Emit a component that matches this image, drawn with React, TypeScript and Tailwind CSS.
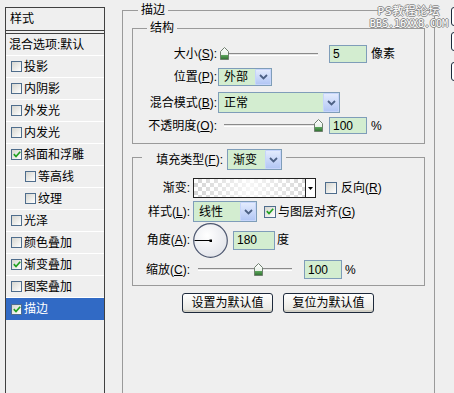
import React from "react";

function Chevron() {
  return (
    <svg width="9" height="6" viewBox="0 0 9 6">
      <path d="M1 1 L4.5 4.5 L8 1" stroke="#4d6185" strokeWidth="1.8" fill="none" />
    </svg>
  );
}

function Select({ text, className }: { text: string; className: string }) {
  return (
    <div className={"flex shrink-0 border border-[#7f9db9] bg-[#d3edd0] " + className}>
      <div className="flex-1 flex items-center pl-[5px]">{text}</div>
      <div className="w-[16px] flex items-center justify-center bg-linear-to-b from-[#e3ebfd] to-[#b3c7f5] border border-[#c6d5fb] rounded-[1px]">
        <Chevron />
      </div>
    </div>
  );
}

function Box({ checked, big }: { checked?: boolean; big?: boolean }) {
  return (
    <span
      className={
        (big ? "w-[12px] h-[12px] " : "w-[11px] h-[11px] ") +
        "shrink-0 flex items-center justify-center border border-[#4f6d8c] bg-linear-to-br from-[#d6d6d0] to-white"
      }
    >
      {checked && (
        <svg width="8" height="7" viewBox="0 0 8 7">
          <path d="M0.8 3.2 L3 5.5 L7.2 0.8" stroke="#21a121" strokeWidth="1.7" fill="none" />
        </svg>
      )}
    </span>
  );
}

function Thumb() {
  return (
    <svg width="9" height="13" viewBox="0 0 9 13">
      <defs>
        <linearGradient id="tg" x1="0" y1="0" x2="0" y2="1">
          <stop offset="0" stopColor="#ffffff" />
          <stop offset="0.62" stopColor="#e9f1e9" />
          <stop offset="0.66" stopColor="#5aa35a" />
          <stop offset="1" stopColor="#2f6f2f" />
        </linearGradient>
      </defs>
      <path d="M0.5 4.5 L4.5 0.5 L8.5 4.5 L8.5 12.5 L0.5 12.5 Z" fill="url(#tg)" stroke="#6f7f6f" strokeWidth="1" />
    </svg>
  );
}

function Slider({ frac, width, className }: { frac: number; width: number; className: string }) {
  const left = 3 + frac * (width - 6) - 4.5;
  return (
    <div className={"relative flex shrink-0 items-center px-[3px] " + className}>
      <div className="w-full h-[3px] border-t border-[#8a8a8a] border-b border-b-white bg-[#e6e6e6]" />
      <div className="absolute top-1/2 -translate-y-[7px] flex" style={{ left }}>
        <Thumb />
      </div>
    </div>
  );
}

function Input({ value, className }: { value: string; className: string }) {
  return (
    <div className={"shrink-0 flex items-center pl-[3px] border border-[#7f9db9] bg-[#d3edd0] " + className}>
      {value}
    </div>
  );
}

function Lbl({ t, k, className }: { t: string; k: string; className: string }) {
  return (
    <div className={"shrink-0 text-right whitespace-nowrap " + className}>
      {t}(<span className="underline">{k}</span>):
    </div>
  );
}

const layers: { t: string; c?: boolean; indent?: boolean; sel?: boolean }[] = [
  { t: "投影" },
  { t: "内阴影" },
  { t: "外发光" },
  { t: "内发光" },
  { t: "斜面和浮雕", c: true },
  { t: "等高线", indent: true },
  { t: "纹理", indent: true },
  { t: "光泽" },
  { t: "颜色叠加" },
  { t: "渐变叠加", c: true },
  { t: "图案叠加" },
  { t: "描边", c: true, sel: true },
];

function LeftPanel() {
  return (
    <div className="ml-[5px] mt-[7px] w-[100px] shrink-0 flex flex-col border-x border-t border-[#404040]">
      <div className="h-[26px] shrink-0 flex items-center pl-[4px] border-b-[4px] border-double border-[#404040]">样式</div>
      <div className="h-[22px] shrink-0 flex items-center pl-[3px] border-b border-white">混合选项:默认</div>
      {layers.map((l) =>
        l.sel ? (
          <div key={l.t} className="h-[22px] shrink-0 flex items-center gap-[2px] pl-[5px] bg-[#316ac5] text-white">
            <Box checked={l.c} />
            <span>{l.t}</span>
          </div>
        ) : (
          <div
            key={l.t}
            className={
              (l.indent ? "pl-[19px] " : "pl-[5px] ") +
              "h-[22px] shrink-0 flex items-center gap-[2px] border-b border-white"
            }
          >
            <Box checked={l.c} />
            <span>{l.t}</span>
          </div>
        )
      )}
    </div>
  );
}

function Dial() {
  return (
    <svg width="35" height="35" viewBox="0 0 35 35">
      <defs>
        <radialGradient id="dg" cx="0.4" cy="0.35" r="0.7">
          <stop offset="0" stopColor="#ffffff" />
          <stop offset="1" stopColor="#e2e4ea" />
        </radialGradient>
      </defs>
      <circle cx="17.5" cy="17.5" r="16.8" fill="url(#dg)" stroke="#4e5870" strokeWidth="1.2" />
      <line x1="1.5" y1="17.5" x2="17.5" y2="17.5" stroke="#000" strokeWidth="1" />
      <rect x="16.5" y="16.5" width="2.5" height="2.5" fill="#000" />
    </svg>
  );
}

function Main() {
  return (
    <div className="ml-[17px] mt-[10px] w-[313px] h-[420px] shrink-0 flex flex-col border border-[#9a9a9a]">
      <div className="-mt-[8px] ml-[15px] w-fit px-[3px] h-[14px] bg-[#efefef]">描边</div>

      {/* 结构 */}
      <div className="ml-[9px] mt-[11px] w-[293px] h-[116px] shrink-0 flex flex-col border border-[#9a9a9a]">
        <div className="-mt-[8px] ml-[14px] w-fit px-[3px] h-[14px] bg-[#efefef]">结构</div>
        <div className="mt-[10px] h-[18px] flex items-center">
          <Lbl t="大小" k="S" className="w-[84px]" />
          <Slider frac={0.005} width={100} className="ml-[4px] w-[100px] h-[18px]" />
          <Input value="5" className="ml-[8px] w-[38px] h-[18px]" />
          <span className="ml-[4px]">像素</span>
        </div>
        <div className="mt-[5px] h-[18px] flex items-center">
          <Lbl t="位置" k="P" className="w-[84px]" />
          <Select text="外部" className="ml-[1px] w-[54px] h-[18px]" />
        </div>
        <div className="mt-[6px] h-[21px] flex items-center">
          <Lbl t="混合模式" k="B" className="w-[84px]" />
          <Select text="正常" className="ml-[1px] w-[122px] h-[21px]" />
        </div>
        <div className="mt-[4px] h-[17px] flex items-center">
          <Lbl t="不透明度" k="O" className="w-[84px]" />
          <Slider frac={1} width={100} className="ml-[4px] w-[100px] h-[17px]" />
          <Input value="100" className="ml-[8px] w-[38px] h-[17px]" />
          <span className="ml-[4px]">%</span>
        </div>
      </div>

      {/* 填充 */}
      <div className="ml-[9px] mt-[13px] w-[293px] h-[129px] shrink-0 flex flex-col border border-[#9a9a9a]">
        <div className="-mt-[9px] ml-[9px] w-fit pl-[11px] pr-[4px] h-[21px] flex items-center bg-[#efefef]">
          <Lbl t="填充类型" k="F" className="w-[70px] text-left" />
          <Select text="渐变" className="ml-[4px] w-[55px] h-[21px]" />
        </div>
        <div className="mt-[8px] h-[20px] flex items-center">
          <div className="w-[57px] shrink-0 text-right">渐变:</div>
          <div className="ml-[3px] w-[123px] h-[20px] shrink-0 flex border border-[#222] bg-[image:conic-gradient(#d4d4d4_25%,#ffffff_0_50%,#d4d4d4_0_75%,#ffffff_0)] bg-[length:8px_8px]">
            <div className="flex-1 bg-linear-to-r from-white/0 via-white/80 to-white/10" />
            <div className="w-[10px] flex items-center justify-center bg-white border-l border-[#222]">
              <svg width="5" height="3" viewBox="0 0 5 3">
                <path d="M0 0 L5 0 L2.5 3 Z" fill="#000" />
              </svg>
            </div>
          </div>
          <div className="ml-[9px] flex">
            <Box big />
          </div>
          <span className="ml-[4px]">
            反向(<span className="underline">R</span>)
          </span>
        </div>
        <div className="mt-[3px] h-[21px] flex items-center">
          <Lbl t="样式" k="L" className="w-[57px]" />
          <Select text="线性" className="ml-[3px] w-[64px] h-[21px]" />
          <div className="ml-[7px] flex">
            <Box big checked />
          </div>
          <span className="ml-[2px]">
            与图层对齐(<span className="underline">G</span>)
          </span>
        </div>
        <div className="h-[36px] flex items-center">
          <Lbl t="角度" k="A" className="w-[57px]" />
          <div className="ml-[3px] flex shrink-0">
            <Dial />
          </div>
          <Input value="180" className="ml-[5px] w-[42px] h-[19px]" />
          <span className="ml-[2px]">度</span>
        </div>
        <div className="mt-[2px] h-[19px] flex items-center">
          <Lbl t="缩放" k="C" className="w-[57px]" />
          <Slider frac={0.64} width={100} className="ml-[5px] w-[100px] h-[19px]" />
          <Input value="100" className="ml-[9px] w-[38px] h-[19px]" />
          <span className="ml-[3px]">%</span>
        </div>
      </div>

      <div className="mt-[7px] ml-[59px] flex gap-[10px]">
        <div className="w-[91px] h-[20px] flex items-center justify-center rounded-[3px] border border-[#1e2a3c] bg-linear-to-b from-white to-[#e6e5df] shadow-[inset_0_-2px_0_#d2d0c6]">
          设置为默认值
        </div>
        <div className="w-[91px] h-[20px] flex items-center justify-center rounded-[3px] border border-[#1e2a3c] bg-linear-to-b from-white to-[#e6e5df] shadow-[inset_0_-2px_0_#d2d0c6]">
          复位为默认值
        </div>
      </div>
    </div>
  );
}

function RightButtons() {
  return (
    <div className="ml-[16px] mt-[7px] flex flex-col shrink-0">
      <div className="w-[75px] h-[19px] rounded-[3px] border border-[#1e2a3c] bg-white" />
      <div className="mt-[6px] w-[75px] h-[19px] rounded-[3px] border border-[#1e2a3c] bg-white" />
      <div className="mt-[11px] w-[75px] h-[19px] rounded-[3px] border border-[#1e2a3c] bg-white" />
    </div>
  );
}

function Watermark() {
  return (
    <div className="absolute left-[366px] top-[6px] w-[86px] flex flex-col items-center text-white leading-[12px] [text-shadow:1px_0_#8a8a8a,-1px_0_#8a8a8a,0_1px_#8a8a8a,0_-1px_#8a8a8a]">
      <div className="text-[11px] tracking-[1px] font-['DejaVu_Sans_Mono','Noto_Sans_CJK_SC',monospace]">PS教程论坛</div>
      <div className="text-[10px] font-['DejaVu_Sans_Mono',monospace]">BBS.16XX8.COM</div>
    </div>
  );
}

export default function App() {
  return (
    <div className="relative flex w-[454px] h-[393px] overflow-hidden bg-[#efefef] text-[12px] leading-[14px] text-black font-['Liberation_Sans','Noto_Sans_CJK_SC',sans-serif]">
      <LeftPanel />
      <Main />
      <RightButtons />
      <Watermark />
    </div>
  );
}
